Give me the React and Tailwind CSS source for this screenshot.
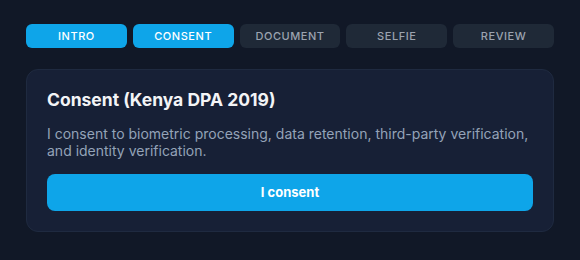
import React from "react";

const steps = ["Intro", "Consent", "Document", "Selfie", "Review"];

export default function App() {
  const current = 1;

  return (
    <div
      className="min-h-[260px] w-full bg-[#111827] px-[26px] pt-6"
      style={{ fontFamily: "Inter, 'Noto Sans', sans-serif" }}
    >
      <div className="grid grid-cols-5 gap-[6px]">
        {steps.map((step, i) => (
          <div
            key={step}
            className={
              i <= current
                ? "flex h-6 items-center justify-center rounded-md bg-[#0ea5e9] text-[11px] font-medium uppercase tracking-wider text-white"
                : "flex h-6 items-center justify-center rounded-md bg-[#1f2937] text-[11px] font-medium uppercase tracking-wider text-[#9ca3af]"
            }
          >
            {step}
          </div>
        ))}
      </div>

      <div className="mt-[21px] rounded-xl border border-[#1f2a40] bg-[#172036] px-5 pb-5 pt-4">
        <h2 className="text-[17.5px] font-bold leading-7 text-[#f3f4f6]">
          Consent (Kenya DPA 2019)
        </h2>
        <p className="mt-[11px] text-sm leading-[17px] text-[#94a3b8]">
          I consent to biometric processing, data retention, third-party
          verification, and identity verification.
        </p>
        <button className="mt-[15px] flex h-[37px] w-full items-center justify-center rounded-lg bg-[#0ea5e9] text-[13px] font-bold text-white">
          I consent
        </button>
      </div>
    </div>
  );
}
